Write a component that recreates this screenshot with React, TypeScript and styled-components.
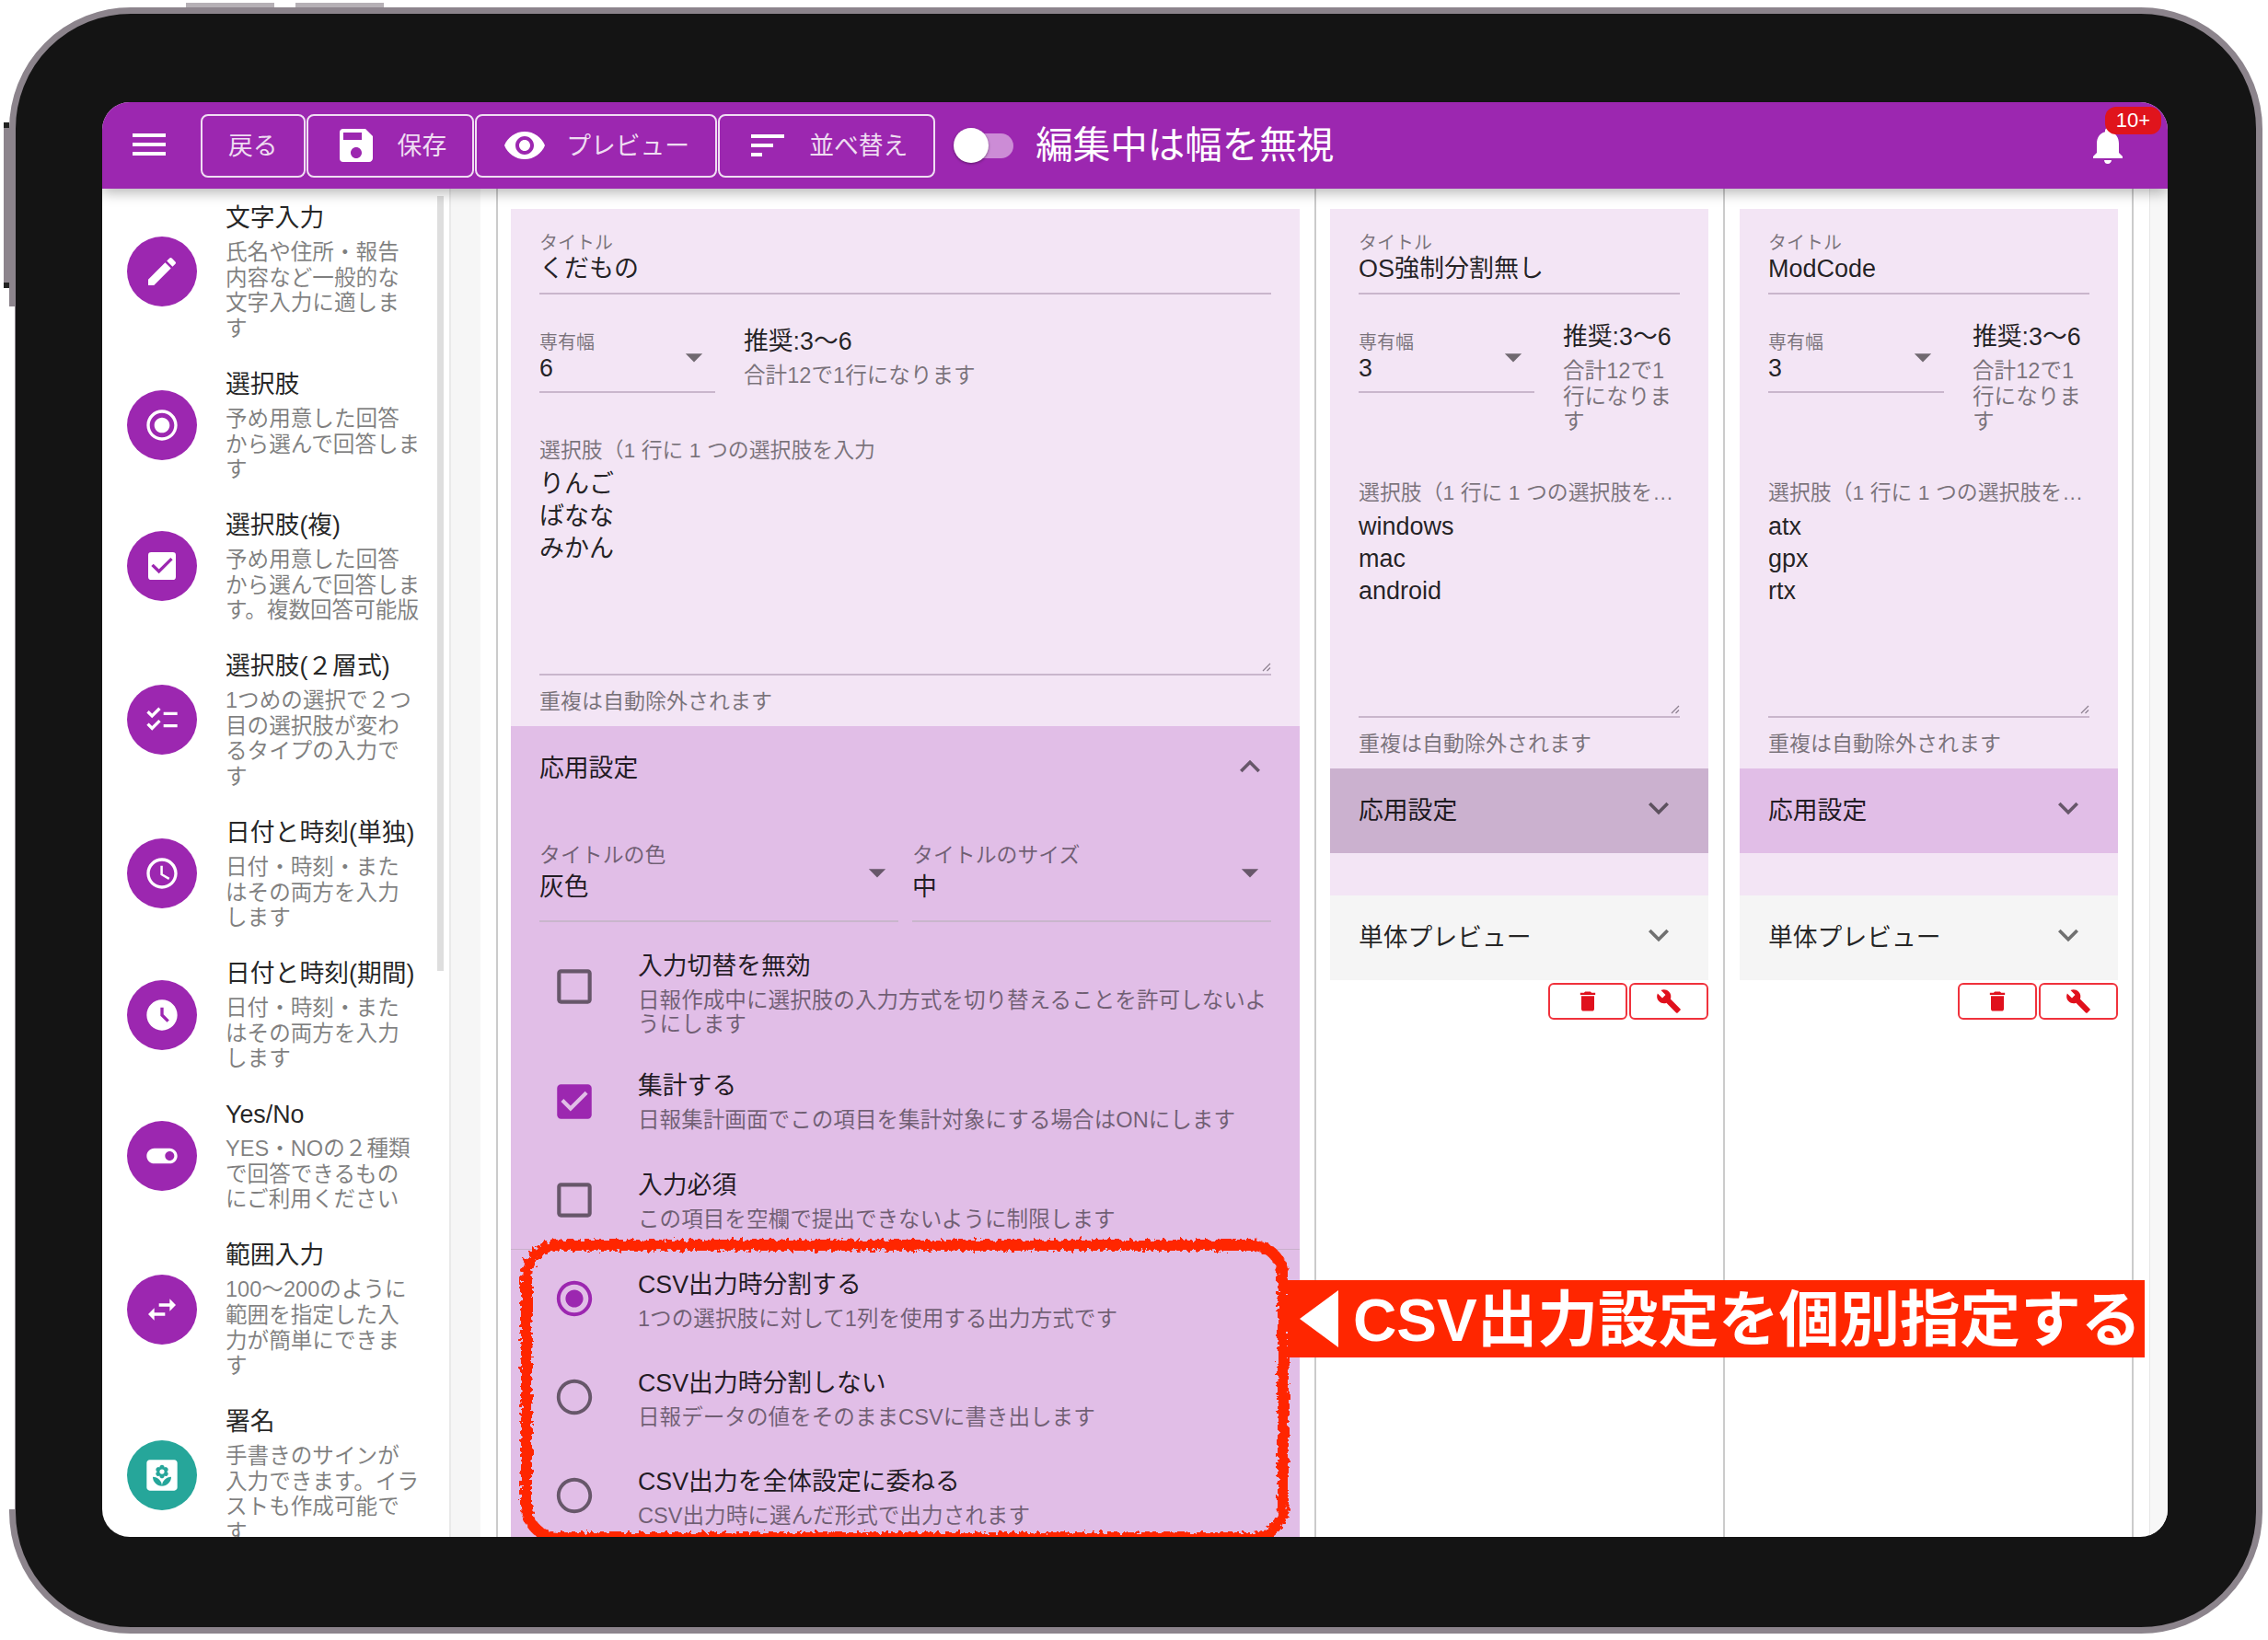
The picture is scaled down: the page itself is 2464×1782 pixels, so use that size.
import React from 'react';
import styled, { createGlobalStyle } from 'styled-components';
import {
  MdMenu, MdSave, MdVisibility, MdSort, MdEdit, MdRadioButtonChecked, MdRadioButtonUnchecked,
  MdCheckBox, MdCheckBoxOutlineBlank, MdChecklist, MdAccessTime, MdAccessTimeFilled, MdToggleOn,
  MdSwapHoriz, MdYard, MdNotifications, MdExpandMore, MdExpandLess, MdDelete, MdBuild, MdArrowDropDown,
} from 'react-icons/md';

const GlobalStyle = createGlobalStyle`
  html, body {
    margin: 0;
    background: #fff;
    font-family: "Liberation Sans", "Noto Sans CJK JP", sans-serif;
    color: rgba(0, 0, 0, 0.87);
  }
  * { box-sizing: border-box; }
`;

const PURPLE = '#9c27b0';
const GRAY = 'rgba(0, 0, 0, 0.5)';
const RED = '#ff2600';

const palette = [
  { title: '文字入力', desc: '氏名や住所・報告\n内容など一般的な\n文字入力に適しま\nす', icon: <MdEdit /> },
  { title: '選択肢', desc: '予め用意した回答\nから選んで回答しま\nす', icon: <MdRadioButtonChecked /> },
  { title: '選択肢(複)', desc: '予め用意した回答\nから選んで回答しま\nす。複数回答可能版', icon: <MdCheckBox /> },
  { title: '選択肢(２層式)', desc: '1つめの選択で２つ\n目の選択肢が変わ\nるタイプの入力で\nす', icon: <MdChecklist /> },
  { title: '日付と時刻(単独)', desc: '日付・時刻・また\nはその両方を入力\nします', icon: <MdAccessTime /> },
  { title: '日付と時刻(期間)', desc: '日付・時刻・また\nはその両方を入力\nします', icon: <MdAccessTimeFilled /> },
  { title: 'Yes/No', desc: 'YES・NOの２種類\nで回答できるもの\nにご利用ください', icon: <MdToggleOn /> },
  { title: '範囲入力', desc: '100〜200のように\n範囲を指定した入\n力が簡単にできま\nす', icon: <MdSwapHoriz /> },
  { title: '署名', desc: '手書きのサインが\n入力できます。イラ\nストも作成可能で\nす', icon: <MdYard />, teal: true },
];

const checkRows = [
  { title: '入力切替を無効', desc: '日報作成中に選択肢の入力方式を切り替えることを許可しないよ\nうにします', checked: false, mt: 32, iconTop: 5 },
  { title: '集計する', desc: '日報集計画面でこの項目を集計対象にする場合はONにします', checked: true, mt: 38, iconTop: 0 },
  { title: '入力必須', desc: 'この項目を空欄で提出できないように制限します', checked: false, mt: 42, iconTop: -1 },
];

const radioRows = [
  { title: 'CSV出力時分割する', desc: '1つの選択肢に対して1列を使用する出力方式です', checked: true, mt: 22 },
  { title: 'CSV出力時分割しない', desc: '日報データの値をそのままCSVに書き出します', checked: false, mt: 41 },
  { title: 'CSV出力を全体設定に委ねる', desc: 'CSV出力時に選んだ形式で出力されます', checked: false, mt: 41 },
];

export default function App() {
  return (
    <Device>
      <GlobalStyle />
      <DeviceButton $left={185} />
      <DeviceButton $left={304} />
      <Screen>
        <Header>
          <MenuIcon><MdMenu /></MenuIcon>
          <ToolButton>戻る</ToolButton>
          <ToolButton><MdSave />保存</ToolButton>
          <ToolButton><MdVisibility />プレビュー</ToolButton>
          <ToolButton><MdSort />並べ替え</ToolButton>
          <Switch><SwitchKnob /></Switch>
          <HeaderTitle>編集中は幅を無視</HeaderTitle>
          <Bell>
            <MdNotifications />
            <Badge>10+</Badge>
          </Bell>
        </Header>
        <Body>
          <Sidebar>
            {palette.map((item) => (
              <PaletteItem key={item.title}>
                <PaletteIcon $teal={item.teal}>{item.icon}</PaletteIcon>
                <div>
                  <PaletteTitle>{item.title}</PaletteTitle>
                  <PaletteDesc>{item.desc}</PaletteDesc>
                </div>
              </PaletteItem>
            ))}
            <SideThumb />
          </Sidebar>
          <Gutter />
          <Spacer />
          <Column $width={889} $left={14} $right={16}>
            <Card>
              <CardFields>
                <FieldLabel>タイトル</FieldLabel>
                <FieldValue>くだもの</FieldValue>
                <WidthRow width="6" hintTop={-5} hint="合計12で1行になります" />
                <ChoiceField lines={['りんご', 'ばなな', 'みかん']} />
              </CardFields>
              <AccordionHead $bg="#e1bee7">
                応用設定
                <Chevron><MdExpandLess /></Chevron>
              </AccordionHead>
              <Advanced>
                <SelectPair>
                  <SelectBox $grow>
                    <SelectLabel>タイトルの色</SelectLabel>
                    <SelectValue $pad={20}>灰色</SelectValue>
                    <Arrow $top={11}><MdArrowDropDown /></Arrow>
                  </SelectBox>
                  <SelectBox $grow>
                    <SelectLabel>タイトルのサイズ</SelectLabel>
                    <SelectValue $pad={20}>中</SelectValue>
                    <Arrow $top={11}><MdArrowDropDown /></Arrow>
                  </SelectBox>
                </SelectPair>
                {checkRows.map((row) => (
                  <OptionRow key={row.title} $mt={row.mt}>
                    <OptionIcon $on={row.checked} $size={50} $top={row.iconTop}>
                      {row.checked ? <MdCheckBox /> : <MdCheckBoxOutlineBlank />}
                    </OptionIcon>
                    <div>
                      <OptionTitle>{row.title}</OptionTitle>
                      <OptionDesc>{row.desc}</OptionDesc>
                    </div>
                  </OptionRow>
                ))}
              </Advanced>
              <Divider />
              <Advanced $bottom={40}>
                {radioRows.map((row) => (
                  <OptionRow key={row.title} $mt={row.mt}>
                    <OptionIcon $on={row.checked} $size={46} $top={-2}>
                      {row.checked ? <MdRadioButtonChecked /> : <MdRadioButtonUnchecked />}
                    </OptionIcon>
                    <div>
                      <OptionTitle>{row.title}</OptionTitle>
                      <OptionDesc>{row.desc}</OptionDesc>
                    </div>
                  </OptionRow>
                ))}
              </Advanced>
            </Card>
          </Column>
          <NarrowColumn title="OS強制分割無し" lines={['windows', 'mac', 'android']} headBg="#cbb1cf" left={15} />
          <NarrowColumn title="ModCode" lines={['atx', 'gpx', 'rtx']} headBg="#e1bee7" left={16} />
          <ColumnEnd><ScrollTrack /></ColumnEnd>
        </Body>
        <Scribble viewBox="0 0 850 352" aria-hidden="true">
          <defs>
            <filter id="rough" x="-5%" y="-5%" width="110%" height="110%">
              <feTurbulence type="fractalNoise" baseFrequency="0.22" numOctaves="2" seed="4" />
              <feDisplacementMap in="SourceGraphic" scale="10" />
            </filter>
          </defs>
          <rect x="14" y="16" width="822" height="318" rx="34" fill="none" stroke={RED} strokeWidth="12" filter="url(#rough)" />
        </Scribble>
        <Callout>
          <CalloutArrow />
          <CalloutText>CSV出力設定を個別指定する</CalloutText>
        </Callout>
      </Screen>
    </Device>
  );
}

function WidthRow({ width, hint, hintTop }: { width: string; hint: string; hintTop: number }) {
  return (
    <SelectRow>
      <SelectBox>
        <FieldLabel>専有幅</FieldLabel>
        <SelectValue $pad={9}>{width}</SelectValue>
        <Arrow $top={6}><MdArrowDropDown /></Arrow>
      </SelectBox>
      <Hint $top={hintTop}>
        <HintTitle>推奨:3〜6</HintTitle>
        <HintText>{hint}</HintText>
      </Hint>
    </SelectRow>
  );
}

function ChoiceField({ lines }: { lines: string[] }) {
  return (
    <>
      <ChoiceLabel>選択肢（1 行に 1 つの選択肢を入力</ChoiceLabel>
      <ChoiceArea>
        {lines.map((line) => <div key={line}>{line}</div>)}
        <ResizeHandle viewBox="0 0 10 10">
          <path d="M1 9 L9 1 M5.5 9 L9 5.5" stroke="#8d8090" strokeWidth="1.2" fill="none" />
        </ResizeHandle>
      </ChoiceArea>
      <Helper>重複は自動除外されます</Helper>
    </>
  );
}

function NarrowColumn({ title, lines, headBg, left }: { title: string; lines: string[]; headBg: string; left: number }) {
  return (
    <Column $width={444} $left={left} $right={31 - left}>
      <Card>
        <CardFields>
          <FieldLabel>タイトル</FieldLabel>
          <FieldValue>{title}</FieldValue>
          <WidthRow width="3" hintTop={-10} hint={'合計12で1\n行になりま\nす'} />
          <ChoiceField lines={lines} />
        </CardFields>
        <AccordionHead $bg={headBg}>
          応用設定
          <Chevron><MdExpandMore /></Chevron>
        </AccordionHead>
        <CardGap />
      </Card>
      <AccordionHead $bg="#f5f5f5">
        単体プレビュー
        <Chevron><MdExpandMore /></Chevron>
      </AccordionHead>
      <ActionRow>
        <ActionButton><MdDelete /></ActionButton>
        <ActionButton><MdBuild /></ActionButton>
      </ActionRow>
    </Column>
  );
}

const Device = styled.div`
  position: relative;
  width: 2448px;
  height: 1767px;
  margin: 8px 0 0 10px;
  padding: 96px 0 0 94px;
  background: #141414;
  border: 7px solid #8c848c;
  border-radius: 132px;

  /* the flat part of the left edge has no rim */
  &::before {
    content: '';
    position: absolute;
    left: -7px;
    top: 318px;
    width: 6px;
    height: 1307px;
    background: #fff;
  }
  /* side button */
  &::after {
    content: '';
    position: absolute;
    left: -13px;
    top: 118px;
    width: 6px;
    height: 168px;
    background: #8c848c;
    border-top: 6px solid #222;
    border-bottom: 6px solid #222;
  }
`;

const DeviceButton = styled.div<{ $left: number }>`
  position: absolute;
  top: -12px;
  left: ${(p) => p.$left}px;
  width: 96px;
  height: 5px;
  background: #b5b0b5;
`;

const Screen = styled.div`
  position: relative;
  width: 2244px;
  height: 1559px;
  background: #fff;
  border-radius: 30px;
  overflow: hidden;
  display: flex;
  flex-direction: column;
`;

const Header = styled.header`
  position: relative;
  z-index: 2;
  flex: none;
  height: 94px;
  display: flex;
  align-items: center;
  gap: 1px;
  padding-left: 107px;
  background: ${PURPLE};
  color: #fff;
  box-shadow: 0 4px 14px rgba(0, 0, 0, 0.3);
`;

const MenuIcon = styled.div`
  position: absolute;
  left: 27px;
  top: 22px;
  display: flex;
  font-size: 48px;
`;

const ToolButton = styled.div`
  height: 69px;
  display: flex;
  align-items: center;
  gap: 21px;
  padding: 0 28px 4px;
  border: 2px solid rgba(255, 255, 255, 0.85);
  border-radius: 8px;
  font-size: 26.8px;
  color: rgba(255, 255, 255, 0.85);

  svg {
    margin-top: 4px;
    font-size: 48px;
    color: #fff;
  }
`;

const Switch = styled.div`
  position: relative;
  width: 62px;
  height: 27px;
  margin-left: 22px;
  border-radius: 14px;
  background: #cc8cd6;
`;

const SwitchKnob = styled.div`
  position: absolute;
  left: -3px;
  top: -6px;
  width: 38px;
  height: 38px;
  border-radius: 50%;
  background: #fff;
  box-shadow: 0 1px 3px rgba(0, 0, 0, 0.4);
`;

const HeaderTitle = styled.div`
  margin-left: 23px;
  font-size: 40.5px;
  line-height: 48px;
`;

const Bell = styled.div`
  position: relative;
  display: flex;
  margin-left: auto;
  margin-right: 41px;
  font-size: 48px;
`;

const Badge = styled.span`
  position: absolute;
  left: 21px;
  top: -18px;
  width: 61px;
  height: 30px;
  border-radius: 12px;
  background: #e0141c;
  color: #fff;
  font-size: 22px;
  line-height: 30px;
  text-align: center;
`;

const Body = styled.div`
  flex: 1;
  min-height: 0;
  display: flex;
`;

const Sidebar = styled.aside`
  position: relative;
  flex: none;
  width: 379px;
  overflow: hidden;
  border-right: 2px solid #e9e9e9;
`;

const SideThumb = styled.div`
  position: absolute;
  left: 364px;
  top: 8px;
  width: 7px;
  height: 842px;
  background: #dedede;
`;

const PaletteItem = styled.div`
  display: flex;
  align-items: center;
  gap: 31px;
  padding: 14px 0 14px 27px;
`;

const PaletteIcon = styled.div<{ $teal?: boolean }>`
  flex: none;
  width: 76px;
  height: 76px;
  display: flex;
  align-items: center;
  justify-content: center;
  border-radius: 50%;
  background: ${(p) => (p.$teal ? '#26a69a' : PURPLE)};
  color: #fff;
  font-size: 40px;
`;

const PaletteTitle = styled.div`
  font-size: 26.8px;
  line-height: 36px;
`;

const PaletteDesc = styled.div`
  margin-top: 6px;
  font-size: 23.6px;
  line-height: 27.7px;
  color: ${GRAY};
  white-space: pre-line;
`;

const Gutter = styled.div`
  flex: none;
  width: 32px;
  background: #f6f6f6;
`;

const Spacer = styled.div`
  flex: none;
  width: 17px;
`;

const Column = styled.section<{ $width: number; $left: number; $right: number }>`
  flex: none;
  width: ${(p) => p.$width}px;
  padding: 22px ${(p) => p.$right}px 0 ${(p) => p.$left}px;
  border-left: 2px solid #cbcbcb;
`;

const ColumnEnd = styled.div`
  flex: 1;
  display: flex;
  justify-content: flex-end;
  border-left: 2px solid #cbcbcb;
`;

const ScrollTrack = styled.div`
  width: 20px;
  background: #f7f7f7;
  border-left: 1px solid #e6e6e6;
`;

const Card = styled.div`
  background: #f3e5f5;
`;

const CardFields = styled.div`
  padding: 25px 31px 13px;
`;

const FieldLabel = styled.div`
  font-size: 20px;
  line-height: 24px;
  color: ${GRAY};
`;

const FieldValue = styled.div`
  font-size: 27px;
  line-height: 32px;
  padding-bottom: 10px;
  border-bottom: 2px solid #c9b6cc;
`;

const SelectRow = styled.div`
  display: flex;
  align-items: flex-start;
  gap: 31px;
  margin: 40px 0 48px;
`;

const SelectBox = styled.div<{ $grow?: boolean }>`
  position: relative;
  flex: ${(p) => (p.$grow ? '1' : 'none')};
  width: ${(p) => (p.$grow ? 'auto' : '191px')};
`;

const SelectValue = styled.div<{ $pad: number }>`
  font-size: 26.8px;
  line-height: 32px;
  padding-bottom: ${(p) => p.$pad}px;
  border-bottom: 2px solid #c9b6cc;
`;

const SelectLabel = styled.div`
  font-size: 22.9px;
  line-height: 28px;
  margin-bottom: 5px;
  color: ${GRAY};
`;

const Arrow = styled.span<{ $top: number }>`
  position: absolute;
  right: 1px;
  top: ${(p) => p.$top}px;
  display: flex;
  font-size: 44px;
  color: rgba(0, 0, 0, 0.54);
`;

const Hint = styled.div<{ $top: number }>`
  margin-top: ${(p) => p.$top}px;
`;

const HintTitle = styled.div`
  font-size: 26.8px;
  line-height: 32px;
`;

const HintText = styled.div`
  margin-top: 8px;
  font-size: 23.6px;
  line-height: 27.5px;
  color: ${GRAY};
  white-space: pre-line;
`;

const ChoiceLabel = styled.div`
  font-size: 22.9px;
  line-height: 28px;
  color: ${GRAY};
  white-space: nowrap;
  overflow: hidden;
  text-overflow: ellipsis;
`;

const ChoiceArea = styled.div`
  position: relative;
  height: 225px;
  margin-top: 6px;
  font-size: 27px;
  line-height: 35px;
  border-bottom: 2px solid #c9b6cc;
`;

const ResizeHandle = styled.svg`
  position: absolute;
  right: 0;
  bottom: 2px;
  width: 10px;
  height: 10px;
`;

const Helper = styled.div`
  margin-top: 14px;
  font-size: 23px;
  line-height: 28px;
  color: ${GRAY};
`;

const AccordionHead = styled.div<{ $bg: string }>`
  height: 92px;
  display: flex;
  align-items: center;
  justify-content: space-between;
  padding: 0 31px 5px;
  background: ${(p) => p.$bg};
  font-size: 26.8px;
`;

const Chevron = styled.span`
  display: flex;
  margin-right: 1px;
  font-size: 44px;
  color: rgba(0, 0, 0, 0.54);
`;

const CardGap = styled.div`
  height: 46px;
`;

const Advanced = styled.div<{ $bottom?: number }>`
  padding: 0 31px ${(p) => p.$bottom ?? 0}px;
  background: #e1bee7;
`;

const SelectPair = styled.div`
  display: flex;
  gap: 15px;
  padding-top: 34px;
`;

const OptionRow = styled.div<{ $mt: number }>`
  display: flex;
  align-items: flex-start;
  padding-top: ${(p) => p.$mt}px;
`;

const OptionIcon = styled.div<{ $on: boolean; $size: number; $top: number }>`
  flex: none;
  width: 76px;
  height: 66px;
  margin: ${(p) => p.$top}px 31px 0 0;
  display: flex;
  align-items: center;
  justify-content: center;
  font-size: ${(p) => p.$size}px;
  color: ${(p) => (p.$on ? PURPLE : 'rgba(0, 0, 0, 0.54)')};
`;

const OptionTitle = styled.div`
  font-size: 26.8px;
  line-height: 32px;
`;

const OptionDesc = styled.div`
  margin-top: 8px;
  font-size: 23.6px;
  line-height: 26px;
  color: ${GRAY};
  white-space: pre-line;
`;

const Divider = styled.div`
  height: 20px;
  background: #e1bee7;
  border-bottom: 1px solid #c9b0cc;
`;

const ActionRow = styled.div`
  display: flex;
  justify-content: flex-end;
  gap: 2px;
  margin-top: 3px;
`;

const ActionButton = styled.div`
  width: 86px;
  height: 40px;
  display: flex;
  align-items: center;
  justify-content: center;
  border: 2px solid #f0323c;
  border-radius: 6px;
  font-size: 28px;
  color: #e0101c;
`;

const Scribble = styled.svg`
  position: absolute;
  left: 447px;
  top: 1226px;
  width: 850px;
  height: 352px;
  z-index: 3;
`;

const Callout = styled.div`
  position: absolute;
  z-index: 4;
  left: 1288px;
  top: 1280px;
  width: 931px;
  height: 84px;
  display: flex;
  align-items: center;
  gap: 16px;
  padding-left: 13px;
  background: ${RED};
`;

const CalloutArrow = styled.div`
  flex: none;
  width: 0;
  height: 0;
  border-top: 31px solid transparent;
  border-bottom: 31px solid transparent;
  border-right: 42px solid #fff;
`;

const CalloutText = styled.span`
  margin-top: -10px;
  color: #fff;
  font-size: 65.6px;
  font-weight: 700;
  white-space: nowrap;
`;
